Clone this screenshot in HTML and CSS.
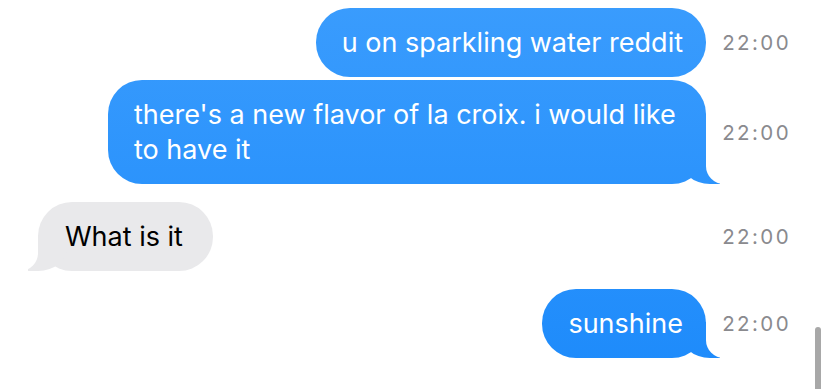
FILE: index.html
```html
<!DOCTYPE html>
<html lang="en">
<head>
    <meta charset="UTF-8">
    <meta name="viewport" content="width=device-width, initial-scale=1.0">
    <title>Messages</title>
    <link rel="stylesheet" href="styles.css">
</head>
<body>
    <div class="chat">
        <div class="row sent">
            <div class="bubble">u on sparkling water reddit</div>
            <div class="time">22:00</div>
        </div>
        <div class="row sent tight">
            <div class="bubble tail">there's a new flavor of la croix. i would like to have it</div>
            <div class="time">22:00</div>
        </div>
        <div class="row received">
            <div class="bubble tail">What is it</div>
            <div class="time">22:00</div>
        </div>
        <div class="row sent">
            <div class="bubble tail">sunshine</div>
            <div class="time">22:00</div>
        </div>
    </div>
    <div class="scrollbar"></div>
</body>
</html>
```
FILE: styles.css
```css
* {
    box-sizing: border-box;
    margin: 0;
    padding: 0;
}

body {
    background-color: #fff;
    font-family: 'Inter', 'Roboto', sans-serif;
    width: 828px;
    height: 389px;
    overflow: hidden;
    position: relative;
}

.chat {
    display: flex;
    flex-direction: column;
    padding: 8px 37px 0 38px;
}

.row {
    display: flex;
    align-items: center;
    margin-top: 18px;
}

.row:first-child {
    margin-top: 0;
}

.row.tight {
    margin-top: 3px;
}

.row.sent {
    justify-content: flex-end;
}

.bubble {
    position: relative;
    z-index: 0;
    font-size: 27px;
    line-height: 35px;
    padding: 17px 23px 17px 26px;
    border-radius: 34px;
    max-width: 598px;
}

.sent .bubble {
    color: #fff;
    background: linear-gradient(to bottom, #3a9cfd 0%, #1c8afb 100%) fixed;
}

.received .bubble {
    color: #000;
    background-color: #e9e9eb;
    margin-right: auto;
    padding: 17px 30px 17px 27px;
}

.bubble.tail::before,
.bubble.tail::after {
    content: "";
    position: absolute;
    z-index: -1;
    bottom: 0;
    height: 36px;
}

.sent .bubble.tail::before {
    right: -14px;
    width: 40px;
    background: linear-gradient(to bottom, #3a9cfd 0%, #1c8afb 100%) fixed;
    border-bottom-left-radius: 30px 26px;
}

.sent .bubble.tail::after {
    right: -40px;
    width: 40px;
    background-color: #fff;
    border-bottom-left-radius: 18px;
}

.received .bubble.tail::before {
    left: -10px;
    width: 40px;
    background-color: #e9e9eb;
    border-bottom-right-radius: 30px 26px;
}

.received .bubble.tail::after {
    left: -40px;
    width: 40px;
    background-color: #fff;
    border-bottom-right-radius: 18px;
}

.time {
    position: relative;
    flex-shrink: 0;
    width: 70px;
    margin-left: 15px;
    font-size: 20.5px;
    letter-spacing: 2.4px;
    color: #8a8a8e;
    text-align: right;
}

.scrollbar {
    position: absolute;
    left: 815px;
    top: 327px;
    width: 6px;
    height: 70px;
    border-radius: 3px;
    background-color: #a8a8a8;
}
```
